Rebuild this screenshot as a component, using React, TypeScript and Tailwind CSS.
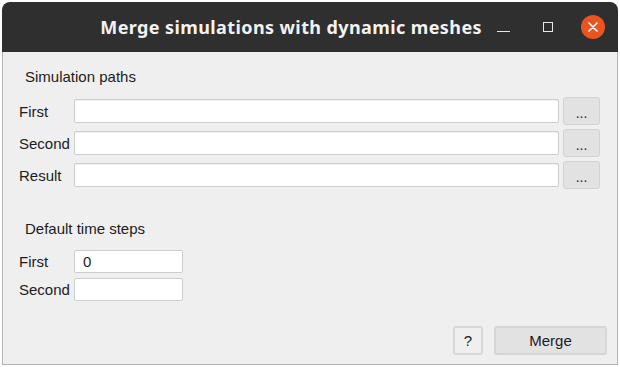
import React from "react";

function PathRow({ label }: { label: string }) {
  return (
    <div className="flex items-center h-[28px]">
      <div className="w-[55px] text-[15px] leading-none">{label}</div>
      <div className="flex-1 h-[24px] bg-white border border-[#cdcdcd] rounded-[2px] shadow-[inset_0_1px_1px_rgba(0,0,0,0.06)]" />
      <div className="ml-[4px] w-[37px] h-[28px] bg-[#e2e2e2] border border-[#d2d2d2] rounded-[3px] flex items-center justify-center text-[14px] leading-none pt-[3px]">
        ...
      </div>
    </div>
  );
}

function StepRow({ label, value }: { label: string; value: string }) {
  return (
    <div className="flex items-center h-[23px]">
      <div className="w-[55px] text-[15px] leading-none">{label}</div>
      <div className="w-[109px] h-[23px] bg-white border border-[#cdcdcd] rounded-[2px] flex items-center pl-[8px] text-[15px] leading-none">
        {value}
      </div>
    </div>
  );
}

export default function App() {
  return (
    <div className="w-[620px] h-[367px] bg-white overflow-hidden font-['Liberation_Sans',Arial,sans-serif] text-[#1c1c1c]">
      <div className="ml-[2px] mt-[2px] w-[616px] h-[363px] flex flex-col rounded-t-[8px] overflow-hidden">
        <div className="h-[50px] bg-[#2f2f2f] flex items-center justify-end pr-[13px] shrink-0">
          <div className="font-['Noto_Sans',sans-serif] font-bold text-[18px] text-[#f2f2f2] tracking-[0.4px]">
            Merge simulations with dynamic meshes
          </div>
          <div className="ml-[15px] w-[13px] h-[1.5px] bg-[#e8e8e8] mt-[9px]" />
          <div className="ml-[33px] w-[10px] h-[10px] border-[1.5px] border-[#e8e8e8]" />
          <div className="ml-[28px] w-[24px] h-[24px] rounded-full bg-[#e95420] flex items-center justify-center">
            <svg width="10" height="10" viewBox="0 0 10 10">
              <path d="M1 1 L9 9 M9 1 L1 9" stroke="#ffffff" strokeWidth="1.6" strokeLinecap="round" />
            </svg>
          </div>
        </div>
        <div className="flex-1 bg-[#efefef] border-x border-b border-[#b3b3b3] flex flex-col pl-[16px] pr-[17px]">
          <div className="mt-[17px] ml-[6px] text-[15px] leading-[16px]">Simulation paths</div>
          <div className="mt-[12px] flex flex-col gap-[4px]">
            <PathRow label="First" />
            <PathRow label="Second" />
            <PathRow label="Result" />
          </div>
          <div className="mt-[32px] ml-[6px] text-[15px] leading-[16px]">Default time steps</div>
          <div className="mt-[13px] flex flex-col gap-[5px]">
            <StepRow label="First" value="0" />
            <StepRow label="Second" value="" />
          </div>
          <div className="mt-[25px] flex justify-end gap-[11px] -mr-[7px]">
            <div className="w-[30px] h-[29px] bg-[#efefef] border-2 border-[#d8d8d8] rounded-[3px] flex items-center justify-center text-[15px] leading-none">
              ?
            </div>
            <div className="w-[113px] h-[29px] bg-[#e2e2e2] border-2 border-[#d6d6d6] rounded-[3px] flex items-center justify-center text-[15px] leading-none">
              Merge
            </div>
          </div>
        </div>
      </div>
    </div>
  );
}
